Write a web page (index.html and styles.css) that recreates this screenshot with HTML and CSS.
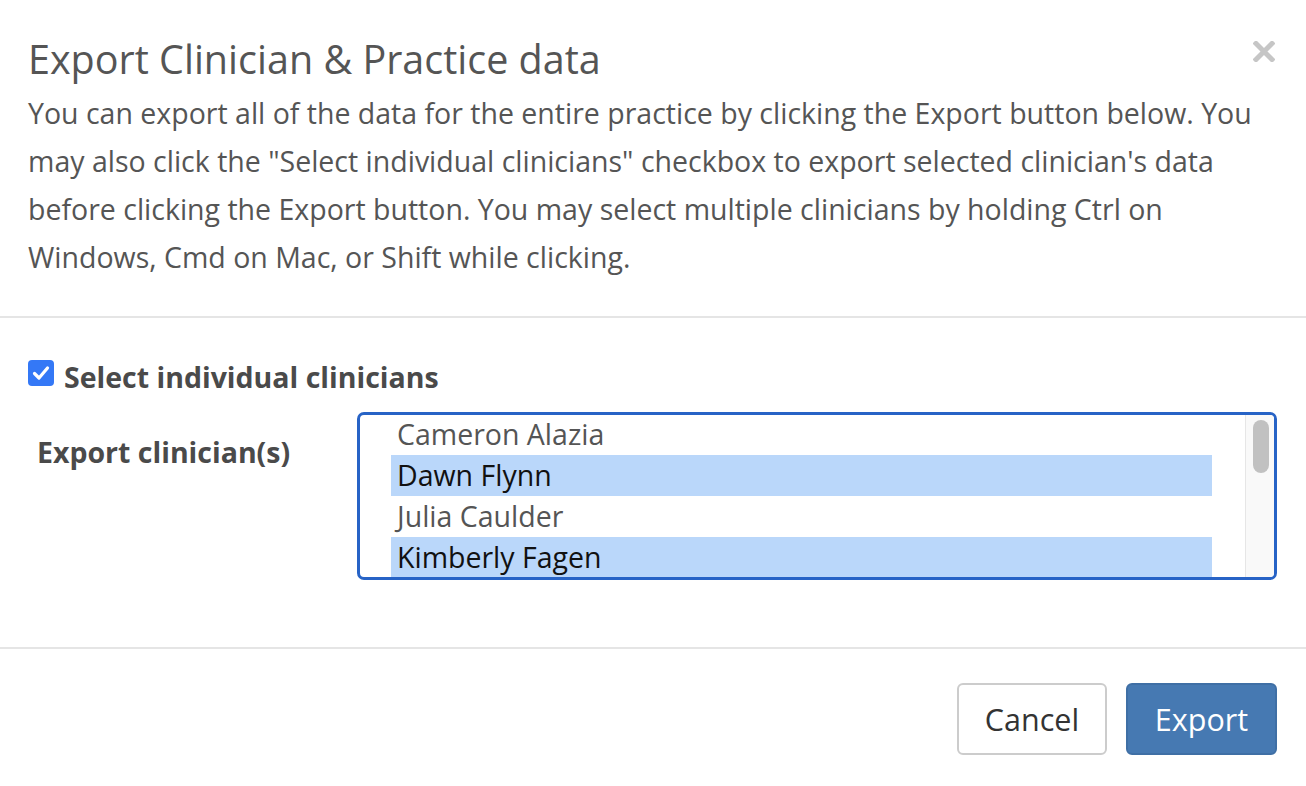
FILE: index.html
```html
<!DOCTYPE html>
<html>
<head>
<meta charset="utf-8">
<link rel="stylesheet" href="styles.css">
</head>
<body>
<div class="modal">
  <div class="modal-header">
    <div class="title-row">
      <h4 class="modal-title">Export Clinician &amp; Practice data</h4>
      <button class="close" aria-label="Close">
        <svg width="22" height="21" viewBox="0 0 22 21"><path d="M3 2.5 L19 18.5 M19 2.5 L3 18.5" stroke="#c6c6c6" stroke-width="5" stroke-linecap="square"/></svg>
      </button>
    </div>
    <p class="intro">You can export all of the data for the entire practice by clicking the Export button below. You may also click the "Select individual clinicians" checkbox to export selected clinician's data before clicking the Export button. You may select multiple clinicians by holding Ctrl on Windows, Cmd on Mac, or Shift while clicking.</p>
  </div>
  <div class="modal-body">
    <label class="check-row">
      <span class="checkbox">
        <svg width="26" height="26" viewBox="0 0 26 26"><path d="M6.5 13.5 L11 18 L19.5 8" fill="none" stroke="#fff" stroke-width="3.2" stroke-linecap="round" stroke-linejoin="round"/></svg>
      </span>
      <span class="check-label">Select individual clinicians</span>
    </label>
    <div class="form-row">
      <div class="control-label">Export clinician(s)</div>
      <div class="listbox">
        <div class="options">
          <div class="option">Cameron Alazia</div>
          <div class="option selected">Dawn Flynn</div>
          <div class="option">Julia Caulder</div>
          <div class="option selected">Kimberly Fagen</div>
        </div>
        <div class="scrollbar"><div class="thumb"></div></div>
      </div>
    </div>
  </div>
  <div class="modal-footer">
    <button class="btn btn-default">Cancel</button>
    <button class="btn btn-primary">Export</button>
  </div>
</div>
</body>
</html>
```
FILE: styles.css
```css
* { box-sizing: border-box; }
html, body {
  margin: 0;
  padding: 0;
  background: #fff;
}
body {
  font-family: "Open Sans", "Liberation Sans", sans-serif;
  color: #555;
}
.modal {
  width: 1306px;
  height: 786px;
  background: #fff;
}
.modal-header {
  padding: 37px 31px 35px 28px;
  border-bottom: 2px solid #e5e5e5;
}
.title-row {
  display: flex;
  justify-content: space-between;
  align-items: flex-start;
}
.modal-title {
  margin: 0;
  font-size: 39.5px;
  line-height: 44px;
  font-weight: 400;
  color: #555;
}
.close {
  border: 0;
  background: transparent;
  padding: 0;
  margin-top: 4px;
  width: 22px;
  height: 21px;
  cursor: pointer;
}
.close svg { display: block; }
.intro {
  margin: 8px 0 0 0;
  font-size: 28.5px;
  line-height: 48px;
  color: #555;
}
.modal-body {
  padding: 38px 29px 67px 28px;
  border-bottom: 2px solid #e5e5e5;
}
.check-row {
  display: flex;
  align-items: flex-start;
  gap: 10px;
}
.checkbox {
  width: 26px;
  height: 26px;
  margin-top: 4px;
  border-radius: 4px;
  background: #3478f6;
  display: block;
}
.checkbox svg { display: block; }
.check-label {
  margin-top: 3px;
  font-size: 28.5px;
  line-height: 36px;
  font-weight: 700;
  color: #4a4a4a;
}
.form-row {
  display: flex;
  margin-top: 17px;
}
.control-label {
  width: 329px;
  padding: 22px 0 0 9px;
  font-size: 28.5px;
  line-height: 36px;
  font-weight: 700;
  color: #4a4a4a;
}
.listbox {
  flex: 1;
  height: 168px;
  border: 3px solid #2763c6;
  border-radius: 7px;
  display: flex;
  overflow: hidden;
  background: #fff;
}
.options {
  flex: 1;
  padding: 0 33px 0 31px;
  margin-top: -1px;
  overflow: hidden;
}
.option {
  height: 41px;
  line-height: 40px;
  padding-left: 6px;
  font-size: 28.5px;
  color: #555;
  white-space: nowrap;
}
.option.selected {
  background: #bad7fa;
  color: #111;
}
.scrollbar {
  width: 29px;
  background: #f9f9f9;
  border-left: 1px solid #e6e6e6;
  padding: 5px 5px 0 7px;
}
.thumb {
  width: 16px;
  height: 53px;
  border-radius: 8px;
  background: #c1c1c1;
}
.modal-footer {
  display: flex;
  justify-content: flex-end;
  gap: 19px;
  padding: 34px 29px 0 0;
}
.btn {
  height: 72px;
  width: 150px;
  border-radius: 6px;
  font-family: "Open Sans", "Liberation Sans", sans-serif;
  font-size: 30.5px;
  line-height: 1;
  padding: 0;
  cursor: pointer;
}
.btn-default {
  background: #fff;
  border: 2px solid #ccc;
  color: #333;
}
.btn-primary {
  width: 151px;
  background: #4679b2;
  border: 2px solid #3f6fa5;
  color: #fff;
}
```
